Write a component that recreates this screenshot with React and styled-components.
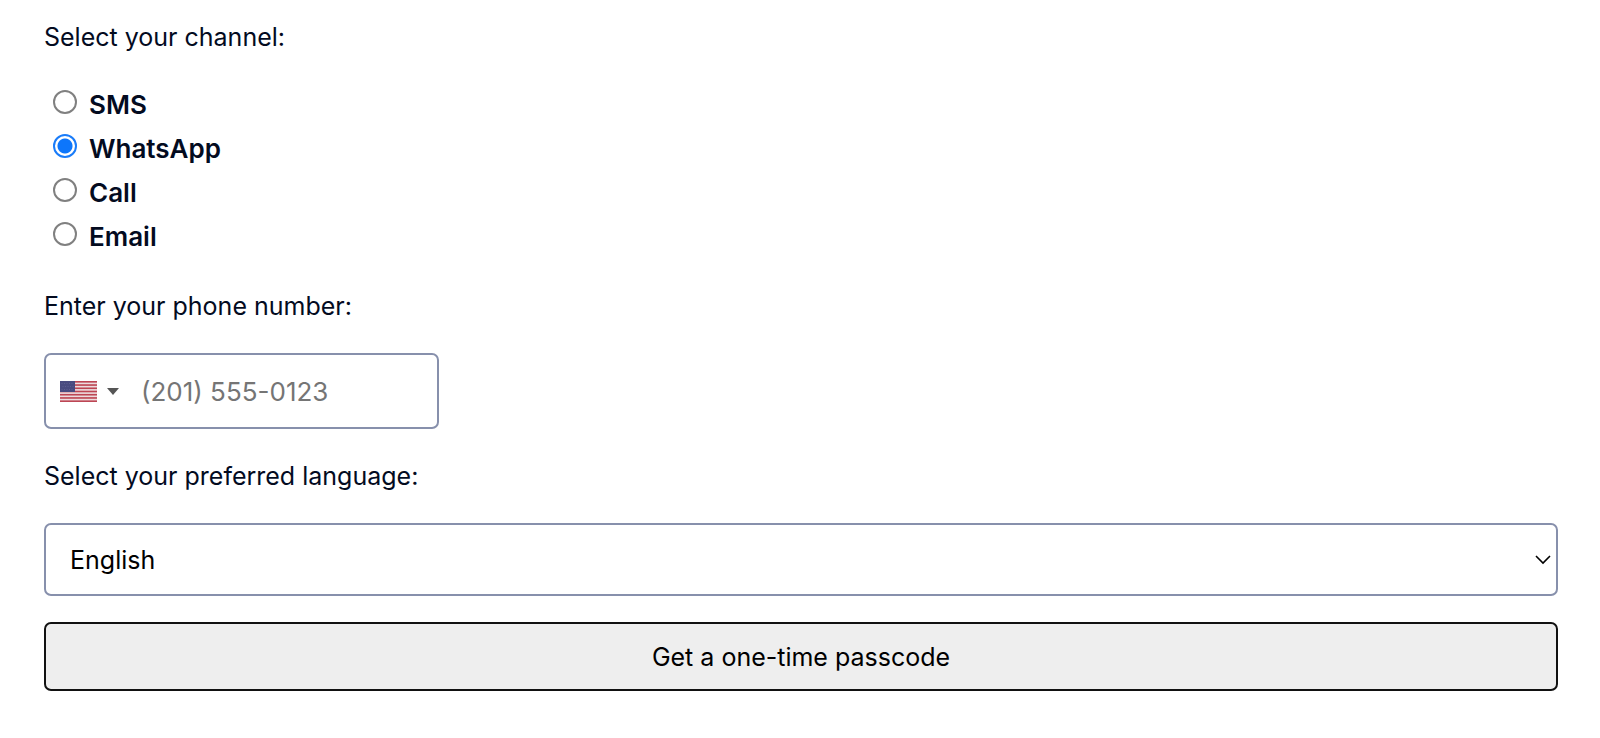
import React, { useState } from 'react';
import styled, { createGlobalStyle } from 'styled-components'

const GlobalStyle = createGlobalStyle`
  body {
    margin: 0;
    background: #fff;
    color: #030b1f;
    font-family: Inter, "Liberation Sans", sans-serif;
    font-size: 25px;
    line-height: 42px;
  }
`
const Form = styled.form`
  display: flex;
  flex-direction: column;
  align-items: stretch;
  gap: 26px;
  padding: 16px 42px 48px 44px;
`
const Channels = styled.fieldset`
  border: 0;
  margin: 0;
  padding: 0;
`
const Legend = styled.legend`
  padding: 0;
  margin-bottom: 25px;
`
const Option = styled.label`
  display: flex;
  align-items: center;
  gap: 12px;
  padding-left: 9px;
  font-size: 26px;
  font-weight: 600;
  line-height: 44px;
`
const Radio = styled.input`
  appearance: none;
  box-sizing: border-box;
  width: 24px;
  height: 24px;
  margin: 0 0 6px;
  border: 2px solid #808080;
  border-radius: 50%;
  background: #fff;

  &:checked {
    border-color: #1a7cf9;
    background: radial-gradient(circle, #0d76fb 7px, #fff 8px);
  }
`
const Label = styled.label`
  align-self: flex-start;
`
const PhoneBox = styled.div`
  box-sizing: border-box;
  display: flex;
  align-items: center;
  align-self: flex-start;
  width: 395px;
  max-width: 100%;
  height: 76px;
  border: 2px solid #8790ac;
  border-radius: 7px;
`
const CountryButton = styled.button`
  display: flex;
  align-items: center;
  gap: 10px;
  padding: 0 10px 0 14px;
  height: 100%;
  border: 0;
  background: none;
`
const PhoneInput = styled.input`
  flex: 1;
  min-width: 0;
  height: 100%;
  box-sizing: border-box;
  padding: 0 12px;
  border: 0;
  outline: 0;
  background: none;
  font: inherit;
  font-size: 26px;

  &::placeholder {
    color: #757575;
    opacity: 1;
  }
`
const SelectWrap = styled.div`
  display: grid;
  align-items: center;
`
const Select = styled.select`
  grid-area: 1 / 1;
  appearance: none;
  box-sizing: border-box;
  width: 100%;
  height: 73px;
  padding: 0 40px 0 24px;
  border: 2px solid #8790ac;
  border-radius: 7px;
  background: #fff;
  color: #000;
  font: inherit;
`
const Chevron = styled.svg`
  grid-area: 1 / 1;
  justify-self: end;
  margin-right: 7px;
  pointer-events: none;
`
const SubmitButton = styled.button`
  box-sizing: border-box;
  height: 69px;
  border: 2px solid #111;
  border-radius: 7px;
  background: #eee;
  color: #000;
  font: inherit;
`

const channels = ['SMS', 'WhatsApp', 'Call', 'Email']
const stripes = [0, 1, 2, 3, 4, 5, 6]

function UsFlag() {
    return (
        <svg width="37" height="21" viewBox="0 0 37 21" aria-hidden="true">
            <rect width="37" height="21" fill="#ecdcde" />
            {stripes.map(i => (
                <rect key={i} y={i * 3.23} width="37" height="1.62" fill="#bd4654" />
            ))}
            <rect width="15" height="11" fill="#494b80" />
            <path d="M1.5 2.5h12M2.5 5.5h11M1.5 8.5h12" stroke="#5c5e90" strokeDasharray="1 1.5" />
        </svg>
    )
}

function App() {
    const [channel, setChannel] = useState('WhatsApp')

    return (
        <>
            <GlobalStyle />
            <Form onSubmit={e => e.preventDefault()}>
                <Channels>
                    <Legend>Select your channel:</Legend>
                    {channels.map(name => (
                        <Option key={name}>
                            <Radio
                                type="radio"
                                name="channel"
                                value={name}
                                checked={channel === name}
                                onChange={() => setChannel(name)}
                            />
                            {name}
                        </Option>
                    ))}
                </Channels>
                <Label htmlFor="phone">Enter your phone number:</Label>
                <PhoneBox>
                    <CountryButton type="button" aria-label="Country: United States">
                        <UsFlag />
                        <svg width="12" height="7" viewBox="0 0 12 7" aria-hidden="true">
                            <path d="M0 0h12L6 7z" fill="#555" />
                        </svg>
                    </CountryButton>
                    <PhoneInput id="phone" type="tel" placeholder="(201) 555-0123" />
                </PhoneBox>
                <Label htmlFor="language">Select your preferred language:</Label>
                <SelectWrap>
                    <Select id="language" defaultValue="en">
                        <option value="en">English</option>
                    </Select>
                    <Chevron width="16" height="10" viewBox="0 0 16 10" aria-hidden="true">
                        <path d="M1 1l7 7 7-7" fill="none" stroke="#000" strokeWidth="1.6" />
                    </Chevron>
                </SelectWrap>
                <SubmitButton type="submit">Get a one-time passcode</SubmitButton>
            </Form>
        </>
    );
}

export default App;
